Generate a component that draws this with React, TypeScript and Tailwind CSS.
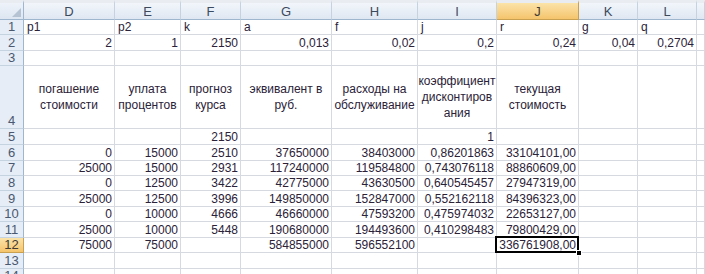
import React from "react";

type Align = "l" | "r" | "c";
type Cell = { t: string; a: Align } | null;

const letters = ["D", "E", "F", "G", "H", "I", "J", "K", "L", ""];

const L = (t: string): Cell => ({ t, a: "l" });
const R = (t: string): Cell => ({ t, a: "r" });
const C = (t: string): Cell => ({ t, a: "c" });
const E: Cell = null;

const rows: { n: number; cells: Cell[] }[] = [
  { n: 1, cells: [L("p1"), L("p2"), L("k"), L("a"), L("f"), L("j"), L("r"), L("g"), L("q"), E] },
  { n: 2, cells: [R("2"), R("1"), R("2150"), R("0,013"), R("0,02"), R("0,2"), R("0,24"), R("0,04"), R("0,2704"), E] },
  { n: 3, cells: [E, E, E, E, E, E, E, E, E, E] },
  {
    n: 4,
    cells: [
      C("погашение\nстоимости"),
      C("уплата\nпроцентов"),
      C("прогноз\nкурса"),
      C("эквивалент в\nруб."),
      C("расходы на\nобслуживание"),
      C("коэффициент\nдисконтиров\nания"),
      C("текущая\nстоимость"),
      E,
      E,
      E,
    ],
  },
  { n: 5, cells: [E, E, R("2150"), E, E, R("1"), E, E, E, E] },
  { n: 6, cells: [R("0"), R("15000"), R("2510"), R("37650000"), R("38403000"), R("0,86201863"), R("33104101,00"), E, E, E] },
  { n: 7, cells: [R("25000"), R("15000"), R("2931"), R("117240000"), R("119584800"), R("0,743076118"), R("88860609,00"), E, E, E] },
  { n: 8, cells: [R("0"), R("12500"), R("3422"), R("42775000"), R("43630500"), R("0,640545457"), R("27947319,00"), E, E, E] },
  { n: 9, cells: [R("25000"), R("12500"), R("3996"), R("149850000"), R("152847000"), R("0,552162118"), R("84396323,00"), E, E, E] },
  { n: 10, cells: [R("0"), R("10000"), R("4666"), R("46660000"), R("47593200"), R("0,475974032"), R("22653127,00"), E, E, E] },
  { n: 11, cells: [R("25000"), R("10000"), R("5448"), R("190680000"), R("194493600"), R("0,410298483"), R("79800429,00"), E, E, E] },
  { n: 12, cells: [R("75000"), R("75000"), E, R("584855000"), R("596552100"), E, R("336761908,00"), E, E, E] },
  { n: 13, cells: [E, E, E, E, E, E, E, E, E, E] },
  { n: 14, cells: [E, E, E, E, E, E, E, E, E, E] },
];

const SEL_COL = 6; // J
const SEL_ROW = 12;

export default function App() {
  return (
    <div className="h-[274px] w-[705px] overflow-hidden bg-white font-['Liberation_Sans',Arial,sans-serif] text-[12px] text-[#2b2238]">
      <div className="grid h-[274px] grid-cols-[24px_91px_66px_60px_91px_86px_79px_82px_59px_59px_1fr] grid-rows-[20px_15px_16px_15px_63px_16px_16px_15px_15px_16px_15px_16px_15px_16px_1fr]">
        {/* corner */}
        <div className="relative border-b border-r border-t-[3px] border-b-[#9eb6ce] border-r-[#9eb6ce] border-t-[#e9edf2] bg-gradient-to-b from-[#eef3fa] to-[#dde6f1]">
          <div className="absolute bottom-[2px] right-[2px] h-0 w-0 border-b-[9px] border-l-[9px] border-b-[#b6c3d3] border-l-transparent" />
        </div>
        {letters.map((c, i) => (
          <div
            key={c + i}
            className={`flex items-center justify-center border-b border-r border-t-[3px] border-t-[#e9edf2] text-[13px] leading-none ${
              i === SEL_COL
                ? "border-b-[#c9a04f] border-r-[#c9a04f] bg-gradient-to-b from-[#fbe3a9] to-[#f5c46c] text-[#3f3a33]"
                : "border-b-[#9eb6ce] border-r-[#c5d2e0] bg-gradient-to-b from-[#f2f6fb] to-[#dfe7f2] text-[#3c4a5e]"
            }`}
          >
            {c}
          </div>
        ))}

        {rows.map((row) => (
          <React.Fragment key={row.n}>
            <div
              className={`flex items-end justify-center border-b border-r text-[13px] leading-[14px] ${
                row.n === SEL_ROW
                  ? "border-b-[#c9a04f] border-r-[#c9a04f] bg-gradient-to-b from-[#fbe3a9] to-[#f5c46c] text-[#3f3a33]"
                  : "border-b-[#c5d2e0] border-r-[#9eb6ce] bg-[#e6edf6] text-[#4a5870]"
              }`}
            >
              {row.n}
            </div>
            {row.cells.map((cell, i) => {
              const selected = row.n === SEL_ROW && i === SEL_COL;
              const header = row.n === 4;
              return (
                <div
                  key={i}
                  className={`relative flex min-w-0 overflow-visible whitespace-pre border-b border-r border-[#d6dae0] leading-[14px] ${
                    header
                      ? "items-center justify-center text-center leading-[16px]"
                      : cell?.a === "r"
                        ? "items-end justify-end pr-[2px]"
                        : "items-end justify-start pl-[3px]"
                  }`}
                >
                  {cell ? <span className={selected ? "relative z-10" : ""}>{cell.t}</span> : null}
                  {selected ? (
                    <>
                      <div className="pointer-events-none absolute -left-[2px] -top-[2px] bottom-[-1px] right-[-1px] border-2 border-black" />
                      <div className="absolute bottom-[-4px] right-[-4px] z-20 h-[6px] w-[6px] border border-white bg-black" />
                    </>
                  ) : null}
                </div>
              );
            })}
          </React.Fragment>
        ))}
      </div>
    </div>
  );
}
